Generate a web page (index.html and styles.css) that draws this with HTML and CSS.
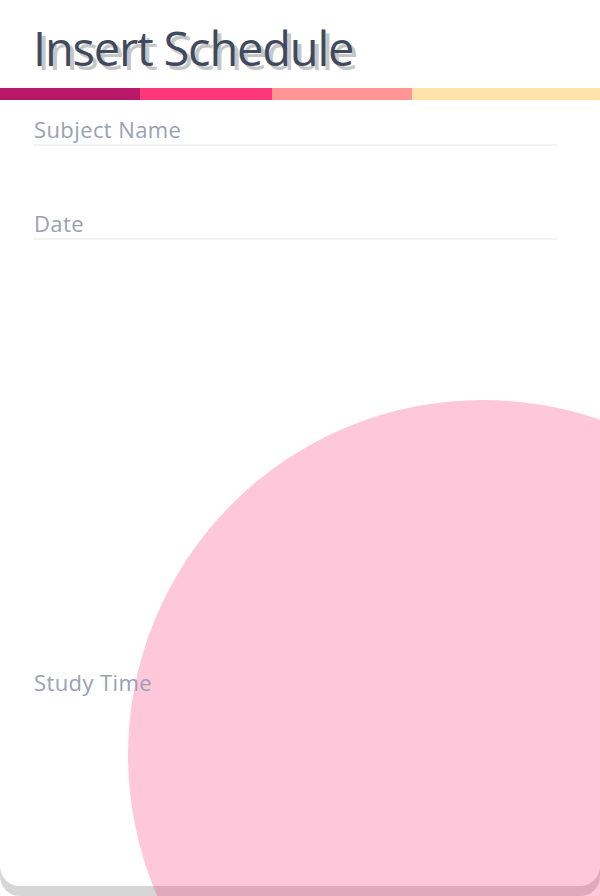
FILE: index.html
```html
<!DOCTYPE html>
<html lang="en">
<head>
<meta charset="utf-8">
<title>Insert Schedule</title>
<link rel="stylesheet" href="styles.css">
</head>
<body>
<div class="card">
  <h1 class="title">Insert Schedule</h1>
  <div class="stripe">
    <span class="seg seg-1"></span>
    <span class="seg seg-2"></span>
    <span class="seg seg-3"></span>
    <span class="seg seg-4"></span>
  </div>
  <form class="form">
    <input class="field" type="text" placeholder="Subject Name">
    <input class="field field-date" type="text" placeholder="Date">
    <label class="label">Study Time</label>
  </form>
  <div class="blob"></div>
</div>
</body>
</html>
```

FILE: styles.css
```css
html, body {
  margin: 0;
  padding: 0;
  width: 600px;
  height: 896px;
  overflow: hidden;
  background: #ffffff;
  font-family: "Open Sans", "Noto Sans", sans-serif;
}

.card {
  position: relative;
  width: 600px;
  height: 886px;
  background: #ffffff;
  border-radius: 20px;
  box-shadow: 0 10px 0 #d6d6d6;
  box-sizing: border-box;
  padding-top: 20px;
}

.title {
  margin: 0 0 12px 33px;
  font-size: 47px;
  line-height: 56px;
  font-weight: 400;
  color: #3f4a5e;
  letter-spacing: -1.2px;
  text-shadow: 4px 4px 0 #c6c6c6;
  position: relative;
  z-index: 2;
}

.stripe {
  display: flex;
  height: 12px;
  width: 600px;
}

.seg { display: block; height: 100%; }
.seg-1 { width: 140px; background: #b8186a; }
.seg-2 { width: 132px; background: #ff3679; }
.seg-3 { width: 140px; background: #ff9494; }
.seg-4 { flex: 1; background: #ffe3a9; }

.form {
  display: flex;
  flex-direction: column;
  padding: 14px 43px 0 34px;
  position: relative;
  z-index: 2;
}

.field {
  display: block;
  width: 523px;
  height: 32px;
  box-sizing: border-box;
  margin: 0;
  padding: 0;
  border: none;
  border-bottom: 2px solid #f1f2f4;
  background: transparent;
  font-family: "Open Sans", "Noto Sans", sans-serif;
  font-size: 22px;
  letter-spacing: 0.4px;
  color: #3f4a5e;
  outline: none;
}

.field::placeholder {
  color: #99a1b2;
  opacity: 1;
}

.field-date {
  margin-top: 62px;
}

.label {
  display: block;
  margin-top: 427px;
  font-size: 22px;
  letter-spacing: 0.4px;
  line-height: 30px;
  color: #99a1b2;
}

.blob {
  position: absolute;
  left: 128px;
  top: 400px;
  width: 710px;
  height: 710px;
  border-radius: 50%;
  background: rgba(252, 54, 121, 0.28);
  z-index: 1;
}
```
